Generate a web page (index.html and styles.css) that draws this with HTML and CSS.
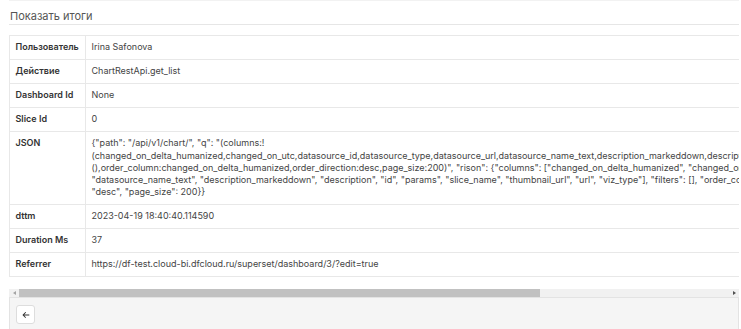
FILE: index.html
```html
<!DOCTYPE html>
<html lang="ru">
<head>
  <meta charset="UTF-8">
  <title>Показать итоги</title>
  <link rel="stylesheet" href="styles.css">
</head>
<body>
  <div class="panel">
    <div class="panel-title">Показать итоги</div>

    <div class="scroll-area">
      <table class="details">
        <tr><th>Пользователь</th><td>Irina Safonova</td></tr>
        <tr><th>Действие</th><td>ChartRestApi.get_list</td></tr>
        <tr><th>Dashboard Id</th><td>None</td></tr>
        <tr><th>Slice Id</th><td>0</td></tr>
        <tr><th>JSON</th><td>{"path": "/api/v1/chart/", "q": "(columns:!(changed_on_delta_humanized,changed_on_utc,datasource_id,datasource_type,datasource_url,datasource_name_text,description_markeddown,description,id,params,slice_name,thumbnail_url,url,viz_type),filters:!(),order_column:changed_on_delta_humanized,order_direction:desc,page_size:200)", "rison": {"columns": ["changed_on_delta_humanized", "changed_on_utc", "datasource_id", "datasource_type", "datasource_url", "datasource_name_text", "description_markeddown", "description", "id", "params", "slice_name", "thumbnail_url", "url", "viz_type"], "filters": [], "order_column": "changed_on_delta_humanized", "order_direction": "desc", "page_size": 200}}</td></tr>
        <tr><th>dttm</th><td>2023-04-19 18:40:40.114590</td></tr>
        <tr><th>Duration Ms</th><td>37</td></tr>
        <tr><th>Referrer</th><td>https://df-test.cloud-bi.dfcloud.ru/superset/dashboard/3/?edit=true</td></tr>
      </table>
    </div>

    <div class="scrollbar">
      <span class="scroll-arrow arrow-left"></span>
      <span class="scroll-track"><span class="scroll-thumb"></span></span>
      <span class="scroll-arrow arrow-right"></span>
    </div>

    <div class="panel-footer">
      <button class="back-button" title="Назад">
        <svg width="8" height="8" viewBox="0 0 448 512" fill="currentColor">
          <path d="M9.4 233.4c-12.5 12.5-12.5 32.8 0 45.3l160 160c12.5 12.5 32.8 12.5 45.3 0s12.5-32.8 0-45.3L109.2 288 416 288c17.7 0 32-14.3 32-32s-14.3-32-32-32l-306.7 0L214.6 118.6c12.5-12.5 12.5-32.8 0-45.3s-32.8-12.5-45.3 0l-160 160z"></path>
        </svg>
      </button>
    </div>
  </div>
</body>
</html>
```

FILE: styles.css
```css
body {
  margin: 0;
  font-family: 'Inter', sans-serif;
  font-size: 9px;
  color: #333;
  background: white;
  overflow: hidden;
}

.panel {
  margin-left: 9px;
  width: 730px;
  border-top: 1px solid #f2f2f2;
}

.panel-title {
  padding: 8px 1px 0;
  height: 15px;
  line-height: 15px;
  font-size: 11px;
  color: #555;
  border-bottom: 1px solid #e6e6e6;
}

.scroll-area {
  overflow: hidden;
  padding-top: 10px;
}

.details {
  border-collapse: collapse;
  width: 1000px;
  margin-bottom: 12px;
}

.details th,
.details td {
  border: 1px solid #e8e8e8;
  padding: 5.35px 5.5px;
  line-height: 12.3px;
  text-align: left;
  vertical-align: top;
}

.details th {
  width: 64px;
  font-weight: 600;
  white-space: nowrap;
  color: #333;
}

.details td {
  color: #444;
}

.scrollbar {
  display: flex;
  align-items: center;
  height: 8px;
  background: #f1f1f1;
}

.scroll-arrow {
  width: 10px;
  display: flex;
  justify-content: center;
}

.scroll-arrow::before {
  content: '';
  width: 0;
  height: 0;
  border-top: 2px solid transparent;
  border-bottom: 2px solid transparent;
}

.arrow-left::before {
  border-right: 3px solid #a3a3a3;
}

.arrow-right::before {
  border-left: 3px solid #505050;
}

.scroll-track {
  flex: 1;
  height: 8px;
}

.scroll-thumb {
  display: block;
  width: 521px;
  height: 8px;
  background: #c1c1c1;
}

.panel-footer {
  background: #f5f5f5;
  border: 1px solid #e3e3e3;
  border-bottom: none;
  padding: 7px 6px;
  height: 40px;
}

.back-button {
  width: 19px;
  height: 19px;
  padding: 0;
  display: flex;
  align-items: center;
  justify-content: center;
  background: white;
  border: 1px solid #ddd;
  border-radius: 3px;
  color: #333;
  cursor: pointer;
}
```
